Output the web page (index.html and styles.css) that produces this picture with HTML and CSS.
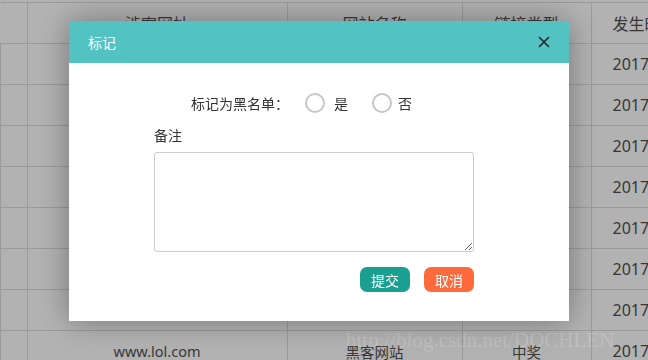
FILE: index.html
```html
<!DOCTYPE html>
<html lang="zh-CN">
<head>
    <meta charset="UTF-8">
    <meta name="viewport" content="width=device-width, initial-scale=1.0">
    <title>标记</title>
    <link rel="stylesheet" href="styles.css">
</head>
<body>
    <div class="page">
        <table class="list">
            <thead>
                <tr>
                    <th class="idx"></th>
                    <th class="url">涉案网址</th>
                    <th class="name">网站名称</th>
                    <th class="type">链接类型</th>
                    <th class="time">发生时间</th>
                </tr>
            </thead>
            <tbody>
                <tr><td></td><td>www.abc123.com</td><td>钓鱼网站</td><td>中奖</td><td class="time">2017-04-12 10:21</td></tr>
                <tr><td></td><td>www.qq-pay.cn</td><td>钓鱼网站</td><td>转账</td><td class="time">2017-04-12 10:35</td></tr>
                <tr><td></td><td>www.taobao-vip.com</td><td>诈骗网站</td><td>退款</td><td class="time">2017-04-12 11:02</td></tr>
                <tr><td></td><td>www.ccb-bank.net</td><td>钓鱼网站</td><td>银行</td><td class="time">2017-04-12 11:40</td></tr>
                <tr><td></td><td>www.game8.com</td><td>赌博网站</td><td>中奖</td><td class="time">2017-04-12 13:15</td></tr>
                <tr><td></td><td>www.free-vpn.org</td><td>黑客网站</td><td>下载</td><td class="time">2017-04-12 14:08</td></tr>
                <tr><td></td><td>www.lucky.cc</td><td>诈骗网站</td><td>中奖</td><td class="time">2017-04-12 15:26</td></tr>
                <tr><td></td><td>www.lol.com</td><td>黑客网站</td><td>中奖</td><td class="time">2017-04-12 16:50</td></tr>
            </tbody>
        </table>
    </div>

    <div class="mask">
        <div class="dialog">
            <div class="dialog-head">
                <span class="dialog-title">标记</span>
                <button class="dialog-close" aria-label="关闭">
                    <svg width="12" height="12" viewBox="0 0 12 12">
                        <path d="M1 1L11 11M11 1L1 11" stroke="#1f2a2a" stroke-width="1.6" fill="none"/>
                    </svg>
                </button>
            </div>
            <div class="dialog-body">
                <div class="mark-row">
                    <span class="mark-label">标记为黑名单：</span>
                    <label class="radio"><input type="radio" name="black" value="1"><i></i>是</label>
                    <label class="radio"><input type="radio" name="black" value="0"><i></i>否</label>
                </div>
                <div class="note-label">备注</div>
                <textarea class="note"></textarea>
                <div class="actions">
                    <button class="btn btn-submit">提交</button>
                    <button class="btn btn-cancel">取消</button>
                </div>
            </div>
        </div>
    </div>

    <div class="watermark">http://blog.csdn.net/DOCHLEN</div>
</body>
</html>
```

FILE: styles.css
```css
html, body {
    margin: 0;
    padding: 0;
    height: 100%;
    overflow: hidden;
}
body {
    font-family: "Noto Sans", "Noto Sans CJK SC", sans-serif;
    background-color: #fff;
    color: #505050;
}
.page {
    padding-top: 2px;
}
.list {
    border-collapse: collapse;
    table-layout: fixed;
    width: 760px;
}
.list th,
.list td {
    height: 40px;
    padding: 0;
    border: 1px solid #ddd;
    text-align: center;
    white-space: nowrap;
    overflow: hidden;
}
.list th {
    font-size: 16px;
    font-weight: normal;
}
.list td {
    font-size: 14.5px;
}
.list .idx {
    width: 26px;
    border-left: none;
}
.list .url {
    width: 259px;
}
.list .name {
    width: 174px;
}
.list .type {
    width: 128px;
}
.list .time {
    text-align: left;
    padding-left: 21px;
}
.list td.time {
    font-size: 16px;
}
.mask {
    position: fixed;
    top: 0;
    left: 0;
    right: 0;
    bottom: 0;
    background-color: rgba(0, 0, 0, 0.3);
    padding: 21px 0 0 69px;
}
.dialog {
    width: 500px;
    height: 300px;
    background-color: #fff;
    box-shadow: 0 0 30px rgba(0, 0, 0, 0.35);
    display: flex;
    flex-direction: column;
}
.dialog-head {
    height: 42px;
    background-color: #52c2c2;
    display: flex;
    align-items: center;
    justify-content: space-between;
    padding: 0 19px 0 19px;
}
.dialog-title {
    color: #fff;
    font-size: 14px;
}
.dialog-close {
    border: none;
    background: none;
    padding: 0;
    width: 12px;
    height: 12px;
    display: flex;
    cursor: pointer;
}
.dialog-body {
    padding: 29px 95px 0 85px;
    font-size: 14px;
    color: #333;
}
.mark-row {
    display: flex;
    align-items: center;
    height: 22px;
    padding-left: 37px;
}
.mark-label {
    margin-right: 16px;
}
.radio {
    display: flex;
    align-items: center;
    gap: 9px;
    margin-right: 24px;
    cursor: pointer;
}
.radio input {
    display: none;
}
.radio i {
    width: 16px;
    height: 16px;
    border: 2px solid #c6c6c6;
    border-radius: 50%;
}
.radio:last-child i {
    margin-right: -3px;
}
.note-label {
    margin-top: 12px;
    line-height: 20px;
}
.note {
    display: block;
    box-sizing: border-box;
    width: 320px;
    height: 100px;
    margin-top: 6px;
    border: 1px solid #ccc;
    border-radius: 3px;
    resize: both;
    outline: none;
}
.actions {
    display: flex;
    justify-content: flex-end;
    gap: 14px;
    margin-top: 15px;
}
.btn {
    width: 50px;
    height: 25px;
    border: none;
    border-radius: 7px;
    color: #fff;
    font-family: inherit;
    font-size: 14px;
    padding: 0;
    cursor: pointer;
}
.btn-submit {
    background-color: #1a9f90;
}
.btn-cancel {
    background-color: #ff6a3c;
}
.watermark {
    position: fixed;
    left: 346px;
    top: 328px;
    font-family: "Liberation Serif", serif;
    font-size: 21px;
    color: rgba(255, 255, 255, 0.16);
    white-space: nowrap;
}
```
